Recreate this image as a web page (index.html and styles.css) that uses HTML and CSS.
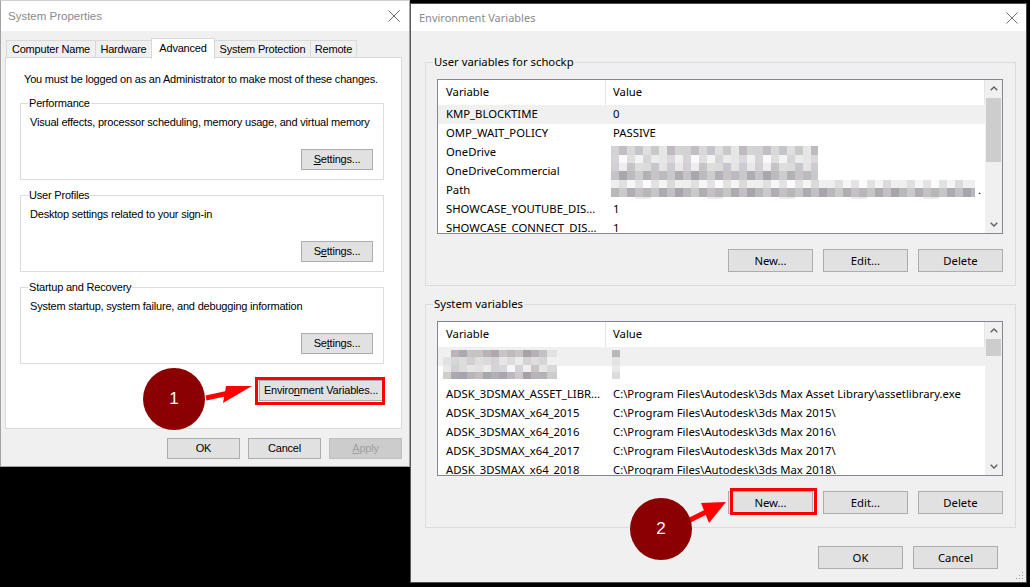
FILE: index.html
```html
<!DOCTYPE html>
<html>
<head>
<meta charset="utf-8">
<title>System Properties - Environment Variables</title>
<link rel="stylesheet" href="styles.css">
</head>
<body>
<div class="desk">
  <div class="leftcol">
    <div class="win sysprops">
      <div class="titlebar">
        <span class="title">System Properties</span>
        <svg class="close" width="12" height="12" viewBox="0 0 12 12"><path d="M0.5 0.5 L11.5 11.5 M11.5 0.5 L0.5 11.5" stroke="#6d6d6d" stroke-width="1" fill="none"/></svg>
      </div>
      <div class="wbody">
        <div class="tabs">
          <div class="tab t-cn">Computer Name</div>
          <div class="tab t-hw">Hardware</div>
          <div class="tab t-adv active">Advanced</div>
          <div class="tab t-sp">System Protection</div>
          <div class="tab t-rm">Remote</div>
        </div>
        <div class="panel">
          <p class="note">You must be logged on as an Administrator to make most of these changes.</p>
          <fieldset class="group">
            <legend>Performance</legend>
            <p class="desc">Visual effects, processor scheduling, memory usage, and virtual memory</p>
            <div class="btnrow"><button class="btn settings"><u>S</u>ettings...</button></div>
          </fieldset>
          <fieldset class="group">
            <legend>User Profiles</legend>
            <p class="desc">Desktop settings related to your sign-in</p>
            <div class="btnrow"><button class="btn settings">S<u>e</u>ttings...</button></div>
          </fieldset>
          <fieldset class="group">
            <legend>Startup and Recovery</legend>
            <p class="desc">System startup, system failure, and debugging information</p>
            <div class="btnrow"><button class="btn settings">Se<u>t</u>tings...</button></div>
          </fieldset>
          <div class="envrow"><button class="btn env">Enviro<u>n</u>ment Variables...</button></div>
        </div>
        <div class="dlgbtns">
          <button class="btn dlg">OK</button>
          <button class="btn dlg">Cancel</button>
          <button class="btn dlg disabled"><u>A</u>pply</button>
        </div>
      </div>
    </div>
  </div>

  <div class="win envvars">
    <div class="titlebar tb2">
      <span class="title">Environment Variables</span>
      <svg class="close" width="12" height="12" viewBox="0 0 12 12"><path d="M0.5 0.5 L11.5 11.5 M11.5 0.5 L0.5 11.5" stroke="#6d6d6d" stroke-width="1" fill="none"/></svg>
    </div>
    <div class="ebody">
      <fieldset class="egroup">
        <legend>User variables for schockp</legend>
        <div class="list">
          <div class="lmain">
            <div class="lhead"><div class="c1">Variable</div><div class="c2">Value</div></div>
            <div class="row sel"><div class="c1">KMP_BLOCKTIME</div><div class="c2">0</div></div>
            <div class="row"><div class="c1">OMP_WAIT_POLICY</div><div class="c2">PASSIVE</div></div>
            <div class="row"><div class="c1">OneDrive</div><div class="c2 vis"><div class="blur blur-a"></div></div></div>
            <div class="row"><div class="c1">OneDriveCommercial</div><div class="c2"></div></div>
            <div class="row"><div class="c1">Path</div><div class="c2 vis"><div class="blur blur-b"></div><span class="dot">.</span></div></div>
            <div class="row"><div class="c1">SHOWCASE_YOUTUBE_DIS...</div><div class="c2">1</div></div>
            <div class="row"><div class="c1">SHOWCASE_CONNECT_DIS...</div><div class="c2">1</div></div>
          </div>
          <div class="sbar">
            <div class="sbtn"><svg width="8" height="5" viewBox="0 0 8 5"><path d="M0.7 4.3 L4 1 L7.3 4.3" stroke="#606060" stroke-width="1.4" fill="none"/></svg></div>
            <div class="thumb th1"></div>
            <div class="sfill"></div>
            <div class="sbtn"><svg width="8" height="5" viewBox="0 0 8 5"><path d="M0.7 0.7 L4 4 L7.3 0.7" stroke="#606060" stroke-width="1.4" fill="none"/></svg></div>
          </div>
        </div>
        <div class="ebtns">
          <button class="btn ebtn">New...</button>
          <button class="btn ebtn">Edit...</button>
          <button class="btn ebtn">Delete</button>
        </div>
      </fieldset>

      <fieldset class="egroup g2">
        <legend>System variables</legend>
        <div class="list">
          <div class="lmain">
            <div class="lhead"><div class="c1">Variable</div><div class="c2">Value</div></div>
            <div class="row sel"><div class="c1 vis"><div class="blur blur-c"></div></div><div class="c2 vis"><div class="blur blur-d"></div></div></div>
            <div class="row"><div class="c1"></div><div class="c2"></div></div>
            <div class="row"><div class="c1">ADSK_3DSMAX_ASSET_LIBR...</div><div class="c2">C:\Program Files\Autodesk\3ds Max Asset Library\assetlibrary.exe</div></div>
            <div class="row"><div class="c1">ADSK_3DSMAX_x64_2015</div><div class="c2">C:\Program Files\Autodesk\3ds Max 2015\</div></div>
            <div class="row"><div class="c1">ADSK_3DSMAX_x64_2016</div><div class="c2">C:\Program Files\Autodesk\3ds Max 2016\</div></div>
            <div class="row"><div class="c1">ADSK_3DSMAX_x64_2017</div><div class="c2">C:\Program Files\Autodesk\3ds Max 2017\</div></div>
            <div class="row"><div class="c1">ADSK_3DSMAX_x64_2018</div><div class="c2">C:\Program Files\Autodesk\3ds Max 2018\</div></div>
          </div>
          <div class="sbar">
            <div class="sbtn"><svg width="8" height="5" viewBox="0 0 8 5"><path d="M0.7 4.3 L4 1 L7.3 4.3" stroke="#606060" stroke-width="1.4" fill="none"/></svg></div>
            <div class="thumb th2"></div>
            <div class="sfill"></div>
            <div class="sbtn"><svg width="8" height="5" viewBox="0 0 8 5"><path d="M0.7 0.7 L4 4 L7.3 0.7" stroke="#606060" stroke-width="1.4" fill="none"/></svg></div>
          </div>
        </div>
        <div class="ebtns">
          <button class="btn ebtn">New...</button>
          <button class="btn ebtn">Edit...</button>
          <button class="btn ebtn">Delete</button>
        </div>
      </fieldset>

      <div class="footer">
        <button class="btn fbtn">OK</button>
        <button class="btn fbtn">Cancel</button>
      </div>
    </div>
    <svg class="grip" width="10" height="10" viewBox="0 0 10 10">
      <rect x="8" y="2" width="1" height="1" fill="#a0a0a0"/>
      <rect x="5" y="5" width="1" height="1" fill="#a0a0a0"/>
      <rect x="8" y="5" width="1" height="1" fill="#a0a0a0"/>
      <rect x="2" y="8" width="1" height="1" fill="#a0a0a0"/>
      <rect x="5" y="8" width="1" height="1" fill="#a0a0a0"/>
      <rect x="8" y="8" width="1" height="1" fill="#a0a0a0"/>
    </svg>
  </div>
</div>

<svg class="annot" width="1030" height="587" viewBox="0 0 1030 587">
  <line x1="206" y1="398" x2="229" y2="393" stroke="#ff0000" stroke-width="5"/>
  <polygon points="252,386 226,386 223,403" fill="#ff0000"/>
  <line x1="688" y1="521" x2="706" y2="512" stroke="#ff0000" stroke-width="5"/>
  <polygon points="726,502 701,503 709,523" fill="#ff0000"/>
</svg>
<div class="redbox rb1"></div>
<div class="redbox rb2"></div>
<div class="badge b1">1</div>
<div class="badge b2">2</div>
</body>
</html>
```

FILE: styles.css
```css
* { box-sizing: border-box; }
html, body { margin: 0; padding: 0; }
body {
  width: 1030px;
  height: 587px;
  background: #000;
  font-family: "Liberation Sans", Arial, sans-serif;
  font-size: 11px;
  letter-spacing: -0.2px;
  color: #000;
  position: relative;
  overflow: hidden;
}
p { margin: 0; }
button { font-family: inherit; font-size: inherit; letter-spacing: inherit; }

.desk { display: flex; align-items: flex-start; height: 587px; }
.leftcol { width: 410px; height: 587px; flex: none; }

.win { background: #f0f0f0; display: flex; flex-direction: column; position: relative; }

/* ---------- System Properties ---------- */
.sysprops { width: 410px; height: 467px; border: 1px solid #a3a3a3; border-top-color: #d0d0d0; }
.titlebar {
  height: 30px;
  background: #fff;
  display: flex;
  align-items: center;
  justify-content: space-between;
  padding: 0 9px 0 7px;
  flex: none;
}
.title { font-size: 11.5px; color: #8a8a8a; letter-spacing: 0; }
.close { display: block; }

.wbody { padding: 0 7px 0 4px; display: flex; flex-direction: column; }
.tabs { display: flex; align-items: flex-end; height: 19px; margin-top: 7px; padding-left: 1px; }
.tab {
  height: 17px;
  border: 1px solid #d9d9d9;
  border-bottom: none;
  background: #f0f0f0;
  margin-left: -1px;
  text-align: center;
  line-height: 17px;
  white-space: nowrap;
}
.tab:first-child { margin-left: 0; }
.t-cn { width: 90px; }
.t-hw { width: 57px; }
.t-adv { width: 64px; }
.t-sp { width: 97px; }
.t-rm { width: 47px; }
.tab.active {
  height: 21px;
  background: #fff;
  margin-bottom: -2px;
  position: relative;
  z-index: 1;
  line-height: 18px;
}
.panel {
  width: 397px;
  height: 372px;
  border: 1px solid #d9d9d9;
  background: #fff;
  padding: 14px 17px 0 14px;
}
.note { margin-left: 4px; line-height: 14px; white-space: nowrap; }
.group {
  margin: 10px 0 0;
  border: 1px solid #dcdcdc;
  padding: 0 10px 9px 9px;
  min-width: 0;
}
.group + .group { margin-top: 8px; }
.group legend { padding: 0 1px; margin-left: -2px; line-height: 14px; }
.desc { margin-top: 5px; line-height: 14px; white-space: nowrap; }
.btnrow { display: flex; justify-content: flex-end; margin-top: 20px; }

.btn {
  height: 21px;
  border: 1px solid #adadad;
  background: #e1e1e1;
  color: #000;
  padding: 0;
  line-height: 19px;
  text-align: center;
  white-space: nowrap;
}
.settings { width: 72px; }
.envrow { display: flex; justify-content: flex-end; margin-top: 16px; padding-right: 1px; }
.env { width: 124px; }
.dlgbtns { display: flex; justify-content: flex-end; gap: 8px; margin-top: 9px; }
.dlg { width: 73px; }
.disabled { background: #cccccc; border-color: #bfbfbf; color: #a0a0a0; }

/* ---------- Environment Variables ---------- */
.envvars {
  width: 617px;
  height: 580px;
  margin-top: 3px;
  border: 1px solid #4d4d4d;
  border-left-color: #5a5a5a;
  flex: none;
  font-family: "Noto Sans", "Liberation Sans", sans-serif;
  font-size: 11.3px;
  letter-spacing: 0;
}
.tb2 { height: 27px; padding: 0 8px 0 8px; }
.tb2 .title { font-size: 11px; }
.ebody { padding: 0 10px 0 14px; display: flex; flex-direction: column; }
.egroup {
  margin: 24px 0 0;
  border: 1px solid #dcdcdc;
  padding: 10px 12px 13px 11px;
  min-width: 0;
}
.egroup.g2 { margin-top: 11px; }
.egroup legend { padding: 0 1px; margin-left: -4px; line-height: 14px; }

.list {
  height: 155px;
  border: 1px solid #828790;
  background: #fff;
  display: flex;
  overflow: hidden;
}
.lmain { flex: 1; overflow: hidden; }
.lhead { height: 25px; display: flex; line-height: 24px; }
.lhead .c1 { border-right: 1px solid #e5e5e5; }
.lhead .c2 { border-right: 1px solid #e5e5e5; }
.row { height: 19px; display: flex; line-height: 18px; }
.row.sel { background: #f0f0f0; }
.c1 { width: 168px; flex: none; padding-left: 8px; white-space: nowrap; overflow: hidden; }
.c2 { flex: 1; padding-left: 7px; white-space: nowrap; overflow: hidden; }
.c2.vis, .c1.vis { overflow: visible; display: flex; align-items: flex-start; }

.sbar { width: 17px; flex: none; background: #f0f0f0; display: flex; flex-direction: column; }
.sbtn { height: 17px; display: flex; align-items: center; justify-content: center; flex: none; }
.sbtn svg { display: block; }
.thumb { margin: 1px 1px 0; background: #cdcdcd; flex: none; }
.th1 { height: 64px; }
.th2 { height: 17px; margin-top: 0; }
.sfill { flex: 1; }

.ebtns { display: flex; justify-content: flex-end; gap: 10px; margin-top: 15px; }
.ebtn { width: 85px; height: 23px; line-height: 20px; }
.footer { display: flex; justify-content: flex-end; gap: 10px; margin-top: 18px; margin-right: 18px; }
.fbtn { width: 85px; height: 23px; line-height: 20px; }
.grip { position: absolute; right: 2px; bottom: 2px; }

/* pixelated / blurred values */
.blur { flex: none; }
.blur-a {
  width: 207px;
  height: 34px;
  margin: 3px 0 0 -2px;
  background:
    linear-gradient(90deg,#d2d2d4 0 8px,#c3bec4 8px 16px,#d9d9d9 16px 24px,#c7c3cb 24px 32px,#e0dfe0 32px 40px,#cbc8cc 40px 48px,#e6e6e6 48px 56px,#bfbac0 56px 64px,#d3d3d3 64px 72px) 0 0 / 72px 9px repeat-x,
    linear-gradient(90deg,#e6e6e8 0 8px,#dad8dc 8px 16px,#f0f0f0 16px 24px,#d6d3d8 24px 32px,#fafafa 32px 40px,#dedede 40px 48px,#f3f3f3 48px 56px,#d8d5da 56px 64px,#ebebeb 64px 72px) -24px 9px / 72px 8px repeat-x,
    linear-gradient(90deg,#dcdcdc 0 8px,#c9c5cc 8px 16px,#e4e4e4 16px 24px,#cfcbd2 24px 32px,#e8e8e8 32px 40px,#d1cfd3 40px 48px,#ededed 48px 56px,#c6c2c8 56px 64px,#dedede 64px 72px) -40px 17px / 72px 8px repeat-x,
    linear-gradient(90deg,#c9c9c9 0 8px,#b0acb4 8px 16px,#c5c3c7 16px 24px,#aaa6ae 24px 32px,#bebbbf 32px 40px,#cdcdcd 40px 48px,#b4b0b7 48px 56px,#c8c4c6 56px 64px,#bbbbbf 64px 72px) -16px 25px / 72px 9px repeat-x;
  background-repeat: repeat-x;
}
.blur-b {
  width: 364px;
  height: 19px;
  margin: -1px 0 0 -2px;
  background:
    linear-gradient(90deg,#eeeeee 0 8px,#e0dfe2 8px 16px,#f6f6f6 16px 24px,#e4e2e6 24px 32px,#fbfbfb 32px 40px,#e2e2e2 40px 48px,#f4f4f4 48px 56px,#dcdadd 56px 64px,#efefef 64px 72px) 0 0 / 72px 8px repeat-x,
    linear-gradient(90deg,#c6c6c6 0 8px,#aeaab2 8px 16px,#c2c0c4 16px 24px,#a8a4ac 24px 32px,#bbb8bc 32px 40px,#cacaca 40px 48px,#b1adb4 48px 56px,#c5c1c3 56px 64px,#b7b7bb 64px 72px) -32px 8px / 72px 9px repeat-x,
    linear-gradient(90deg,#ffffff 0 24px,#eaeaea 24px 40px,#ffffff 40px 72px) 0 17px / 72px 2px repeat-x;
}
.dot { margin-left: 3px; line-height: 18px; }
.blur-c {
  width: 114px;
  height: 29px;
  margin: 3px 0 0 -3px;
  background:
    linear-gradient(90deg,#f0f0f0 0 8px,#bcb4b8 8px 16px,#a9abb2 16px 24px,#c8c4c6 24px 32px,#c4c4c4 32px 40px,#b9b2b6 40px 48px,#b0a8ae 48px 56px,#c6c6c8 56px 64px,#bfbbbd 64px 72px,#c9c4c4 72px 80px,#a8a2a6 80px 88px,#b6b0b6 88px 96px,#c2c2c6 96px 104px,#e2e2e2 104px 114px) 0 0 / 114px 7px no-repeat,
    linear-gradient(90deg,#e2e2e2 0 8px,#d6d6d8 8px 16px,#dcdcdc 16px 24px,#d2ced2 24px 32px,#dededf 32px 40px,#dadada 40px 48px,#d4d2d6 48px 56px,#e6e6e6 56px 64px,#dcdcdc 64px 72px,#ebebeb 72px 80px,#d4d4d4 80px 88px,#dddde0 88px 96px,#d6d6d6 96px 104px,#f0f0f0 104px 114px) 0 7px / 114px 8px no-repeat,
    linear-gradient(90deg,#e8e8e8 0 8px,#d2ced2 8px 16px,#dcdcdc 16px 24px,#e6e6e6 24px 32px,#e2e0e2 32px 40px,#ececec 40px 48px,#d6d3d6 48px 56px,#d8d8dc 56px 64px,#f6f6fa 64px 72px,#d4d4d4 72px 80px,#f0eeee 80px 88px,#c8c4ca 88px 96px,#e6e6e6 96px 104px,#d8d8d8 104px 114px) 0 15px / 114px 7px no-repeat,
    linear-gradient(90deg,#cfcfca 0 8px,#aea8b0 8px 16px,#a8a4ae 16px 24px,#b6b6b6 24px 32px,#c2bcc0 32px 40px,#a6a8a8 40px 48px,#b2aeb6 48px 56px,#aca4ae 56px 64px,#bcb8bc 64px 72px,#d0c8ca 72px 80px,#a8a0a6 80px 88px,#b8b4ba 88px 96px,#b4b4b8 96px 104px,#cccccc 104px 114px) 0 22px / 114px 7px no-repeat;
}
.blur-d {
  width: 8px;
  height: 29px;
  margin: 3px 0 0 -1px;
  background: linear-gradient(180deg,#b8b8b8 0 7px,#e2e2e2 7px 15px,#e8e8e8 15px 22px,#dcdcdc 22px 29px);
}

/* ---------- annotations ---------- */
.annot { position: absolute; left: 0; top: 0; pointer-events: none; }
.redbox { position: absolute; border: 3px solid #ff0000; }
.rb1 { left: 255px; top: 377px; width: 130px; height: 28px; }
.rb2 { left: 730px; top: 488px; width: 87px; height: 27px; }
.badge {
  position: absolute;
  width: 62px;
  height: 62px;
  border-radius: 50%;
  background: #8b0000;
  color: #fff;
  font-size: 17px;
  letter-spacing: 0;
  display: flex;
  align-items: center;
  justify-content: center;
}
.b1 { left: 143px; top: 368px; }
.b2 { left: 630px; top: 498px; }
```
